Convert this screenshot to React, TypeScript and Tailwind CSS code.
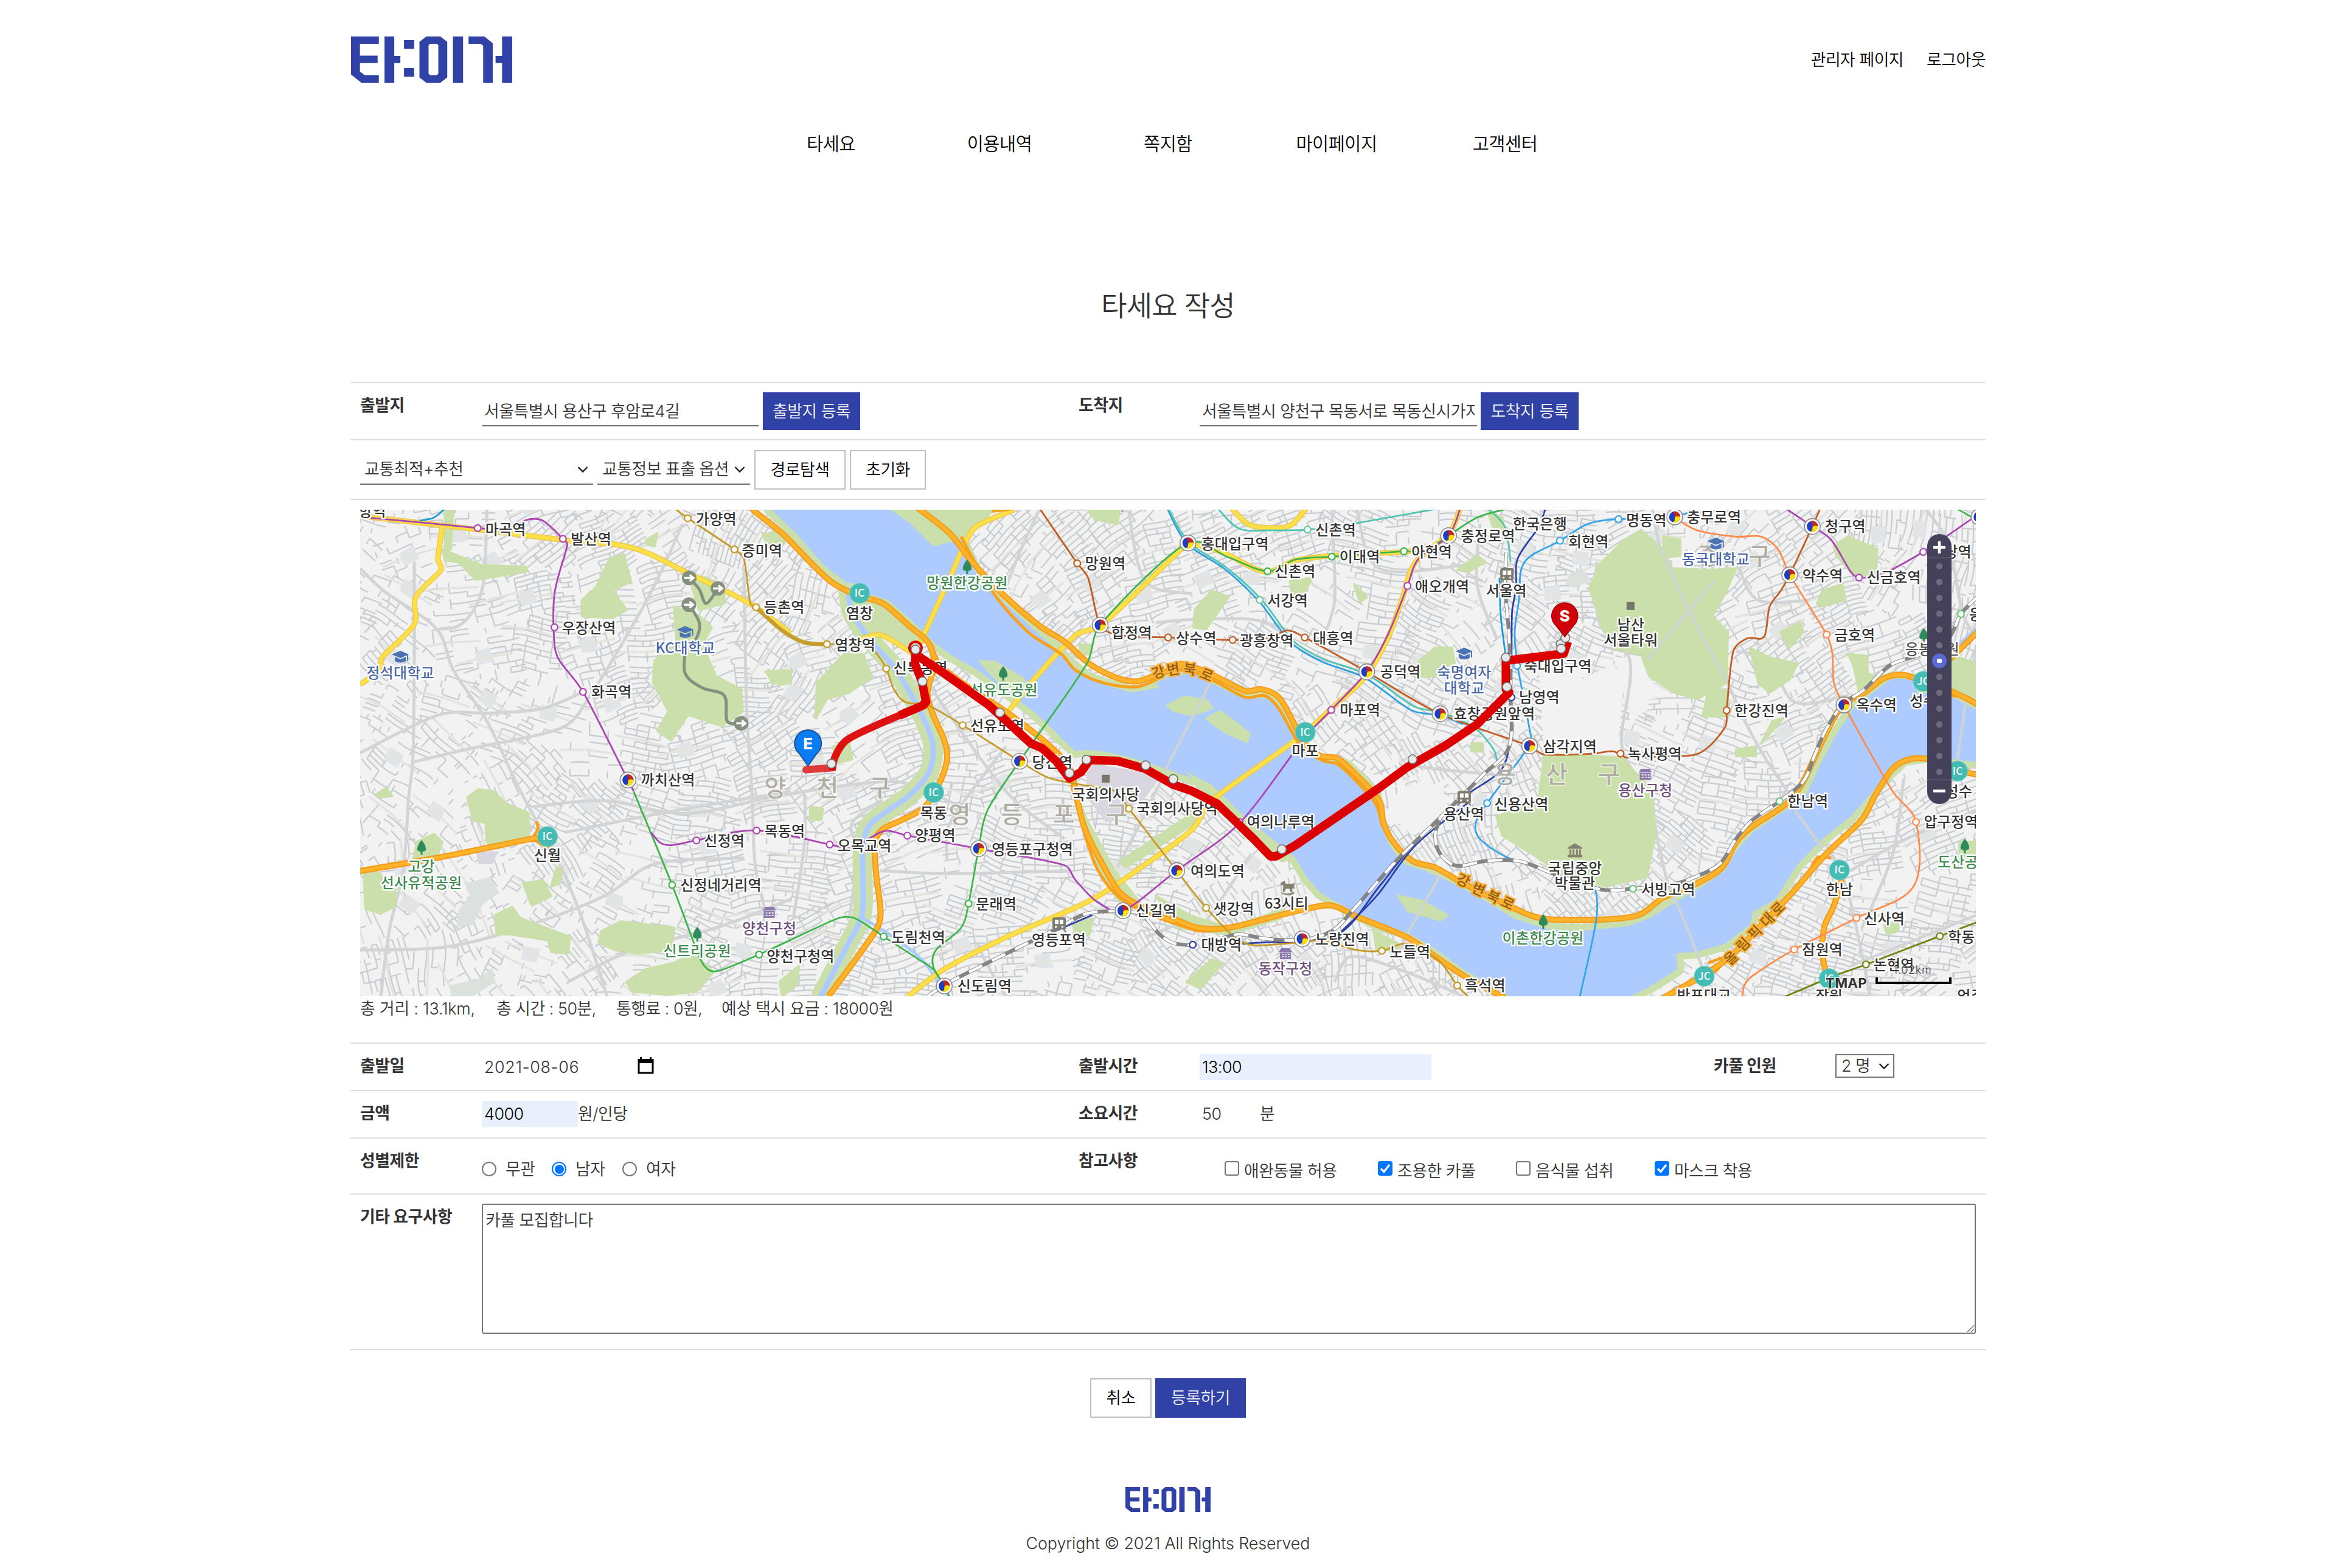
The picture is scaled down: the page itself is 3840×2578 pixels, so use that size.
import React from "react";

/* ---------- map geometry ----------
   The map is surveyed in four sheets (A–D), left to right. A point list is a
   string such as "A 26,40 B 10,20"; a letter switches to that sheet. */

const SHEETS: Record<string, number> = { A: 580, B: 1240, C: 1900, D: 2560 };
type Pt = [number, number];

function pts(src: string): Pt[] {
  let origin = SHEETS.A;
  const out: Pt[] = [];
  for (const token of src.trim().split(/\s+/)) {
    if (token in SHEETS) {
      origin = SHEETS[token];
      continue;
    }
    const [x, y] = token.split(",").map(Number);
    out.push([origin + x / 2.1778, 830 + y / 1.9122]);
  }
  return out;
}

const f = (n: number) => n.toFixed(1);

function line(src: string, close = false): string {
  const p = pts(src);
  return "M" + p.map(([x, y]) => `${f(x)} ${f(y)}`).join("L") + (close ? "Z" : "");
}

function curve(src: string): string {
  const p = pts(src);
  let d = `M${f(p[0][0])} ${f(p[0][1])}`;
  for (let i = 0; i < p.length - 1; i++) {
    const a = p[Math.max(0, i - 1)];
    const b = p[i];
    const c = p[i + 1];
    const e = p[Math.min(p.length - 1, i + 2)];
    const len = Math.hypot(c[0] - b[0], c[1] - b[1]);
    const t1 = Math.min(1 / 6, (len * 0.35) / (Math.hypot(c[0] - a[0], c[1] - a[1]) || 1));
    const t2 = Math.min(1 / 6, (len * 0.35) / (Math.hypot(e[0] - b[0], e[1] - b[1]) || 1));
    d += `C${f(b[0] + (c[0] - a[0]) * t1)} ${f(b[1] + (c[1] - a[1]) * t1)} ${f(c[0] - (e[0] - b[0]) * t2)} ${f(
      c[1] - (e[1] - b[1]) * t2
    )} ${f(c[0])} ${f(c[1])}`;
  }
  return d;
}

function random(seed: number) {
  let s = seed;
  return () => {
    s = (s + 0x6d2b79f5) | 0;
    let t = Math.imul(s ^ (s >>> 15), 1 | s);
    t = (t + Math.imul(t ^ (t >>> 7), 61 | t)) ^ t;
    return ((t ^ (t >>> 14)) >>> 0) / 4294967296;
  };
}

/* Side streets: the city is split into neighbourhoods around jittered centres,
   each filled with its own rotated lattice of blocks. */
function streets() {
  const r = random(7);
  const size = 84;
  const cols = 34;
  const rows = 12;
  const seeds: { x: number; y: number; ang: number; a: number; b: number; keep: number; amp: number }[] = [];
  for (let j = 0; j < rows; j++) {
    for (let i = 0; i < cols; i++) {
      const x = 560 + i * size + (r() - 0.5) * 60;
      const y = 810 + j * size + (r() - 0.5) * 60;
      const rural = x < 850 || (x < 1130 && y > 1400);
      seeds.push({
        x,
        y,
        ang: Math.sin(x / 300) * 0.7 + Math.cos(y / 240) * 0.6 + (r() - 0.5) * 0.9,
        a: 18 + r() * 14,
        b: 7.5 + r() * 4,
        keep: rural ? 0.25 + r() * 0.35 : r() < 0.12 ? 0.35 : 0.82,
        amp: 1 + r() * 3,
      });
    }
  }
  let fine = "";
  let wide = "";
  let lots = "";
  seeds.forEach((s, k) => {
    const i = k % cols;
    const j = Math.floor(k / cols);
    const near = seeds.filter((_, n) => Math.abs((n % cols) - i) <= 2 && Math.abs(Math.floor(n / cols) - j) <= 2 && n !== k);
    const co = Math.cos(s.ang);
    const si = Math.sin(s.ang);
    const inside = (x: number, y: number) => {
      const d = (x - s.x) ** 2 + (y - s.y) ** 2;
      return near.every((n) => (x - n.x) ** 2 + (y - n.y) ** 2 > d);
    };
    const place = (u: number, v: number): Pt => {
      const w = v + Math.sin(u / 17 + k) * s.amp;
      return [s.x + u * co - w * si, s.y + u * si + w * co];
    };
    for (let u = -90; u < 90; u += s.a) {
      for (let v = -90; v < 90; v += s.b) {
        const p = place(u, v);
        if (!inside(p[0], p[1])) continue;
        const q = place(u + s.a, v);
        const m = place(u + s.a / 2, v);
        const t = place(u + (r() < 0.75 ? 0 : r() * s.a), v);
        const t2 = place(u, v + s.b);
        if (r() < s.keep) fine += `M${f(p[0])} ${f(p[1])}L${f(m[0])} ${f(m[1])}L${f(q[0])} ${f(q[1])}`;
        if (r() < s.keep) fine += `M${f(t[0])} ${f(t[1])}l${f(t2[0] - p[0])} ${f(t2[1] - p[1])}`;
      }
    }
    const e = place(-46, 0);
    const g = place(46, 4);
    wide += `M${f(e[0])} ${f(e[1])}L${f(s.x)} ${f(s.y)}L${f(g[0])} ${f(g[1])}`;
    if (r() < 0.3) {
      const c = [place(-14, -10), place(12, -13), place(15, 11), place(-12, 12)];
      lots += "M" + c.map((n) => `${f(n[0])} ${f(n[1])}`).join("L") + "Z";
    }
  });
  return { fine, wide, lots };
}
const STREETS = streets();

const RIVER =
  "B 60,15 150,90 250,190 330,245 380,250 410,280 480,300 560,360 640,430 700,470 800,520 1000,650 1080,715 1100,735 1150,775 1180,770 1250,775 1350,795 1460,825 1568,860 C 100,835 200,880 330,990 430,1060 500,1110 540,1170 590,1220 650,1250 720,1285 800,1320 900,1345 1000,1395 1100,1460 1200,1510 1290,1560 D 230,1560 340,1510 430,1460 425,1410 500,1405 600,1380 690,1320 700,1280 780,1240 860,1130 950,1050 1050,980 1100,930 1180,850 1240,800 1320,790 1510,810 1510,650 1450,620 1400,600 1290,590 1270,550 1200,545 1130,590 1060,640 1000,720 940,820 880,930 800,970 700,1030 640,1090 600,1150 520,1200 420,1250 330,1300 250,1325 140,1335 C 1520,1340 1400,1335 1280,1300 1150,1230 1040,1180 960,1150 890,1130 850,1090 820,1040 795,980 785,920 740,870 680,820 610,810 560,790 500,740 470,690 440,640 400,610 340,605 290,600 200,560 140,530 60,535 0,560 B 1450,575 1350,590 1270,570 1190,545 1130,500 1060,440 960,360 860,280 790,210 740,110 640,130 560,60 480,10";

const PARKS = [
  "A 920,170 970,155 995,240 930,270 980,330 930,355 820,350 820,300 870,260",
  "A 1150,320 1240,350 1285,385 1250,440 1300,540 1390,580 1395,650 1320,695 1200,660 1140,740 1090,710 1130,650 1075,560 1080,490 1160,440",
  "A 1200,220 1270,230 1330,260 1330,310 1240,330",
  "A 410,920 450,895 500,900 550,940 630,970 630,1040 520,1080 480,1060 475,1000 430,990",
  "A 230,1060 290,1035 320,1060 300,1110 215,1120",
  "A 40,1160 90,1155 150,1210 155,1260 100,1285 45,1270",
  "A 890,1340 960,1310 1150,1330 1140,1400 1020,1410 940,1400 880,1375",
  "A 980,1500 1050,1460 1150,1440 1220,1410 1290,1470 1230,1530 1130,1540 1000,1530",
  "A 510,1290 570,1265 600,1300 690,1330 780,1360 770,1380 640,1360 560,1350 515,1350",
  "A 320,140 460,190 620,195 620,210 440,235 380,180 330,175",
  "A 330,10 360,10 350,140 330,150",
  "A 610,1190 680,1180 710,1230 640,1260",
  "A 1485,530 1568,520 1568,560 1500,560",
  "A 85,910 120,890 140,915 100,920",
  "A 1050,110 1090,90 1080,130 1055,125",
  "A 730,1140 750,1150 740,1190 710,1200",
  "A 700,1370 775,1380 770,1410 710,1405",
  "B 225,560 320,470 390,470 420,540 340,590 260,610 220,670",
  "B 40,525 120,520 130,560 90,565",
  "B 30,95 90,80 120,110 60,140",
  "B 480,10 860,10 800,70 700,130 560,60",
  "B 280,760 340,750 350,800 300,810",
  "B 200,950 245,955 240,990 200,990",
  "B 340,240 480,310 620,430 540,440 420,400",
  "B 1165,440 1210,440 1200,470 1165,465",
  "B 1180,5 1310,5 1300,60 1220,45",
  "B 1310,1120 1568,970 C 140,1000 B 1330,1140",
  "B 1140,880 1190,990 1290,1150 1380,1250 1300,1240 1200,1080",
  "B 1140,1320 1210,1300 1200,1350 1150,1350",
  "B 90,1500 160,1450 150,1510 100,1545",
  "B 1160,760 1260,770 1460,825 1568,870 C 200,930 330,1050 450,1120 500,1110 430,1050 200,860 0,800 B 1400,790 1200,745",
  "C 0,1230 120,1290 260,1330 460,1270 450,1300 260,1350 80,1330",
  "C 930,540 945,490 1000,450 1060,450 1070,500 1020,510 1000,540",
  "C 140,330 200,270 260,290 180,390 135,385",
  "C 480,240 560,230 530,280 490,290",
  "C 710,250 755,290 730,305",
  "C 1080,205 1150,160 1180,180 1120,210",
  "C 1190,20 1240,40 1250,100 1210,80",
  "C 1130,750 1170,750 1170,775 1130,775",
  "C 110,1500 200,1430 240,1440 160,1520",
  "C 780,1340 870,1380 870,1400 790,1400",
  "C 1390,790 1568,790 D 230,795 340,900 350,1040 320,1170 170,1200 C 1430,1150 1370,1110 1240,1040 1220,980 1370,930",
  "D 240,110 300,80 380,140 410,200 550,205 640,200 600,280 555,350 610,400 605,560 500,610 420,590 330,540 300,470 200,450 160,380 115,260 150,190",
  "D 380,100 440,110 440,160 380,165",
  "D 540,590 610,580 610,665 520,665",
  "D 690,450 760,480 860,500 830,550 760,590 720,560",
  "D 800,400 870,370 880,400 830,450",
  "D 930,310 950,270 1020,250 1030,300 940,320",
  "D 1040,470 1110,475 1110,530 1140,540 1080,590 1060,500",
  "D 990,130 1040,100 1145,140 1140,220 1060,220 1000,160",
  "D 640,770 710,760 710,790 640,790",
  "D 730,750 770,680 810,670 760,720",
  "D 1410,470 1500,500 1500,640 1420,600",
  "D 1440,1060 1500,1060 1500,1110 1440,1110",
  "D 1170,1320 1220,1310 1220,1340 1180,1350",
];

const ISLANDS = [
  "B 800,488 860,490 960,540 1010,590 930,600 850,540",
  "C 35,630 100,600 180,610 210,640 130,665 60,650",
  "C 175,670 230,645 300,690 340,720 330,750 250,720 200,690",
  "C 860,1225 950,1240 1050,1290 1020,1310 900,1280",
];

const CLEARINGS = [
  "C 1370,500 1568,520 D 60,560 200,500 240,560 220,720 230,790 C 1390,790",
  "C 870,890 960,870 1010,900 1060,920 1000,1000 920,1040 870,1000 850,940",
  "D 250,560 320,600 330,640 260,680",
  "D 200,480 300,480 340,560 420,600 260,620",
];

const CIVIC = ["B 1190,810 1460,850 1400,920 1260,1000 1190,920", "A 440,1090 520,1090 500,1130 450,1130"];

const GREY_ROADS = [
  "A 26,780 310,660 500,655 680,640 820,590",
  "A 26,200 110,270 300,390 360,520 480,680 600,900 740,1130 820,1300 910,1545",
  "A 480,15 470,230 440,320 380,380 310,390",
  "A 220,180 220,500 215,800 200,920 180,1150 130,1340 100,1545",
  "A 210,810 400,770 750,700 850,600 1040,320 1120,180 1180,60",
  "A 26,1400 330,1390 600,1330 900,1230 1080,1130 1400,1110",
  "A 770,1500 1000,1400 1300,1330 1568,1240",
  "A 640,950 900,930 1200,970 1568,900",
  "A 760,1030 1100,970 1430,920 1568,905",
  "A 1400,200 1410,640 1430,920 1440,1130 1480,1290",
  "B 0,930 260,890 500,870 620,900 760,960",
  "B 620,560 900,900 1110,1050",
  "B 180,910 180,1060 140,1300",
  "B 340,1300 370,1090 350,1000 460,930",
  "B 690,1120 700,1000 900,760",
  "B 450,1150 700,1160 1130,1150",
  "B 1568,640 1460,860 1300,1140",
  "B 900,1545 830,1440 800,1380",
  "B 1020,15 950,150 900,260",
  "B 1340,20 1400,240 1568,280",
  "B 1400,1360 1568,1300",
  "C 200,550 30,840 0,860",
  "C 0,370 140,360 340,360 460,390",
  "C 630,15 640,300 600,420",
  "C 720,15 800,200 1100,190",
  "C 920,820 1000,830 1230,850",
  "C 1020,1160 900,1350 860,1420",
  "C 180,1310 280,1180 340,1100",
  "C 640,1500 700,1420 900,1470 1100,1545",
  "C 1160,60 1150,250 1220,420",
  "D 340,15 370,140 430,270 520,400 610,560 660,660 740,790 870,960 990,1110 1050,1250 1120,1545",
  "D 140,180 150,370 260,490 230,720 240,790 330,930 360,1060 400,1200 460,1320 530,1480",
  "D 650,200 720,300 900,300",
  "D 1320,15 1400,120 1450,340 1500,420",
  "D 640,460 760,490 850,620 1040,600",
  "D 1500,440 1460,650 1430,820",
  "D 850,960 950,1080",
  "D 1050,1150 1250,1050 1500,960",
  "D 1090,1330 1200,1100 1240,860",
  "D 1050,1450 1500,1290",
];

const STREAM =
  "B 335,260 350,340 420,430 500,510 550,580 610,680 640,760 625,840 560,910 480,960 410,1010 388,1080 388,1180 385,1290 330,1390 235,1550";

const YELLOW_ROADS = [
  "A 26,35 450,78 750,110 1000,135 1200,215 1420,310 1568,405",
  "A 320,70 305,170 315,205 225,290 220,375 105,480 95,520 26,565",
  "B 360,430 440,408 500,430 570,470",
  "B 590,440 700,230 760,110 800,65 930,15",
  "B 900,660 1000,550 1150,410 1240,380 1550,120",
  "B 550,1545 680,1460 900,1360 1200,1245 1400,1130 1568,1020 C 200,930 500,740 630,640 750,540 830,420 880,300 930,180 1050,90 1090,10",
  "C 270,10 330,60 400,72 480,65 540,10",
  "C 120,120 240,150 390,210 500,175 630,160 890,148 940,140",
];

const HIGHWAYS = [
  "A 1430,10 B 0,20 100,90 200,180 280,245 370,285 460,310 560,385 620,430 660,500 760,570 900,650 1060,760 1130,830 1150,900 1180,1010 1240,1120 1310,1220 1400,1270 1500,1310 C 60,1300 150,1330 260,1330 400,1300 540,1270 630,1260 720,1295 900,1360 1000,1420 1120,1490 1250,1550",
  "B 630,440 645,500 620,590 640,660 680,740 690,800 660,880 610,950 530,990 460,1020 432,1060 435,1150 452,1280 440,1330 370,1420 265,1545",
  "B 585,10 700,90 780,180 900,290 1020,380 1110,430 1200,500 1300,545 1370,555 1440,535 1520,510 C 90,500 180,525 320,585 380,580 440,605 490,680 530,750 590,790 650,797 730,860 800,930 815,1000 850,1060 920,1120 1000,1140 1100,1190 1240,1250 1380,1300 1568,1305 D 150,1305 290,1290 380,1235 500,1190 590,1140 640,1060 700,1010 820,940 880,870 950,740 1020,630 1100,590 1170,545 1240,535 1320,560 1420,590 1510,630",
  "D 380,1550 520,1480 620,1420 720,1330 830,1230 960,1100 1090,990 1140,910 1200,830 1260,800 1330,800 1440,835 1510,850",
  "D 1020,1170 990,1260 955,1330 950,1420 985,1550",
  "D 1405,485 1510,395",
  "A 20,1152 300,1110 500,1075 640,1050 700,1045",
];

const RAMPS = [
  "B 740,100 850,270 980,400 1100,470 1150,520 1250,560 1370,572 1450,545",
  "C 0,530 100,520 200,550 320,605 390,600 440,640 520,760 600,805 650,815 730,880 790,945 810,1010",
  "A 640,1050 662,1020 658,995",
  "A 640,1050 705,1080",
  "B 1135,880 1220,1130 1330,1250 1568,1335 C 180,1340 290,1330",
  "B 850,20 930,12",
  "D 900,1160 930,1110 980,1110",
  "D 540,1440 600,1425 560,1470 420,1530",
  "D 1400,600 1470,605 1510,630",
];

const RAILS = [
  "C 1255,150 1250,250 1265,420 1270,600 1265,760 1170,850 1010,990 860,1120 700,1280 630,1340 524,1368 400,1365 300,1350 240,1362",
  "B 1320,1276 1190,1285 1090,1330 950,1390 700,1500 620,1545",
  "B 1320,1276 1390,1290 1450,1350 1500,1378 1568,1385",
  "D 1510,285 1445,343 1400,420 1300,470 1190,505 1100,580 1020,630 960,710 920,790 880,870 796,932 700,990 640,1050 580,1130 480,1175 400,1195 271,1207 160,1210 C 1430,1162 1300,1120 1180,1120 1080,1135 1020,1100 1000,1040 1020,980",
];

const SUBWAYS: { color: string; d: string }[] = [
  { color: "#1b9ad8", d: "A 240,50 290,40 330,12" },
  { color: "#2f9fe0", d: "C 40,10 112,122 247,202 367,301 445,392 496,443 596,494 750,545 915,646 1018,662 1100,690" },
  { color: "#4fc6b4", d: "C 44,10 119,118 254,198 377,297 455,388 504,437 604,486 759,535 924,634 1018,652 1140,700 1210,770 1222,810" },
  { color: "#4fc6b4", d: "C 220,10 300,75 420,80 543,78 700,60 1010,12" },
  { color: "#4fc6b4", d: "C 1190,12 1250,70 1270,180" },
  { color: "#1b9ad8", d: "C 1230,230 1235,350 1253,480" },
  { color: "#2b3fa6", d: "C 1395,12 1370,70 1295,170 1290,260 1275,340 1273,605 1265,760 1230,840 1100,920 930,1060 800,1200 670,1340 524,1372 400,1375 310,1380" },
  { color: "#2b3fa6", d: "C 1120,935 930,1070 790,1230 660,1345" },
  { color: "#2b3fa6", d: "B 1210,1290 1090,1335 1000,1370" },
  { color: "#c59a26", d: "A 1150,10 1199,42 1366,140 1400,170 1423,310 1443,322 B 100,395 180,433 260,438 400,440 440,470 472,515 500,580 540,620 620,630 746,693 950,806 1060,860 1240,890 1290,900 1341,955 1512,1150 C 180,1267 290,1365 360,1385 524,1375 600,1370 720,1400 809,1402 900,1380 1010,1430 1079,1511 1120,1548" },
  { color: "#c25c20", d: "B 1020,10 1156,184 1195,230 1238,378 1310,410 1482,417 C 275,425 400,420 470,395 533,417 755,525 1018,657 1338,758 1390,785 1568,782 D 200,775 250,795 380,790 510,780 600,700 606,646 630,460 680,420 740,415 760,320 800,270 832,220 913,68 942,10" },
  { color: "#3db54b", d: "A 1005,900 1143,1195 1240,1420 1270,1460 1310,1465 1454,1414 B 300,1300 360,1300 463,1357 590,1430 640,1460 680,1513 700,1550" },
  { color: "#3db54b", d: "B 680,1513 640,1450 650,1400 740,1330 767,1254 803,1081 835,960 950,806 1190,500 1238,378 1550,120 C 260,165 400,209 500,172 630,163 888,146 960,146 1048,97 1150,40 1260,12" },
  { color: "#ab45b3", d: "A 26,38 240,55 447,73 560,80 620,48 680,50 752,107 768,125 722,280 722,440 740,490 824,588 985,865 1005,900" },
  { color: "#ab45b3", d: "A 1068,1030 1100,1062 1140,1070 1230,1055 1445,1024 B 270,1068 350,1080 400,1055 470,1025 548,1040 803,1081 1110,1133 1150,1180 1230,1250 1320,1276 1512,1150 C 300,1000 535,730 628,645 755,525 830,410 901,255 940,170 1048,97 1090,10" },
  { color: "#35a4e8", d: "D 520,10 400,40 219,45 110,60 10,113 C 1320,180 1300,300 1285,400 1295,505 1345,740 1338,758 1186,938 1145,1000 1160,1050 1250,1105 1340,1130 1490,1180 D 130,1200 140,1300 80,1548" },
  { color: "#ff8b4b", d: "D 420,40 500,80 640,100 730,100 790,140 832,220 964,408 985,470 990,560 1026,630 1200,900 1284,997 1275,1200 1071,1299 848,1398 700,1480 670,1510 662,1548" },
  { color: "#ab45b3", d: "D 815,10 913,68 980,110 1050,210 1080,229 1170,215 1310,148 1400,95 1490,40" },
  { color: "#3db54b", d: "D 1430,12 1490,42" },
  { color: "#75830b", d: "D 810,1548 980,1485 1105,1445 1369,1356 1510,1310" },
];

/* [sheet, markerX, markerY, line colour, labelX, labelY, name] */
const STATIONS: [string, number, number, string, number, number, string][] = [
  ["A", 447, 73, "#ab45b3", 474, 76, "마곡역"],
  ["A", 752, 107, "#ab45b3", 780, 108, "발산역"],
  ["A", 1199, 42, "#c59a26", 1228, 44, "가양역"],
  ["A", 1366, 140, "#c59a26", 1392, 143, "증미역"],
  ["A", 722, 385, "#ab45b3", 748, 386, "우장산역"],
  ["A", 824, 588, "#ab45b3", 853, 588, "화곡역"],
  ["A", 1230, 1055, "#ab45b3", 1257, 1056, "신정역"],
  ["A", 1143, 1195, "#3db54b", 1172, 1195, "신정네거리역"],
  ["B", 6, 322, "#c59a26", 34, 322, "등촌역"],
  ["B", 260, 438, "#c59a26", 288, 440, "염창역"],
  ["B", 472, 515, "#c59a26", 498, 513, "신목동역"],
  ["B", 746, 693, "#c59a26", 773, 695, "선유도역"],
  ["B", 8, 1024, "#ab45b3", 36, 1025, "목동역"],
  ["B", 270, 1068, "#ab45b3", 297, 1070, "오목교역"],
  ["B", 548, 1040, "#ab45b3", 575, 1039, "양평역"],
  ["B", 767, 1254, "#3db54b", 793, 1254, "문래역"],
  ["B", 463, 1357, "#3db54b", 490, 1360, "도림천역"],
  ["B", 17, 1414, "#3db54b", 44, 1418, "양천구청역"],
  ["B", 1156, 184, "#c25c20", 1184, 184, "망원역"],
  ["B", 1341, 955, "#c59a26", 1368, 955, "국회의사당역"],
  ["C", 44, 417, "#c25c20", 72, 418, "상수역"],
  ["C", 275, 425, "#c25c20", 300, 426, "광흥창역"],
  ["C", 533, 417, "#c25c20", 562, 418, "대흥역"],
  ["C", 543, 78, "#6cc79a", 571, 78, "신촌역"],
  ["C", 630, 163, "#3db54b", 657, 163, "이대역"],
  ["C", 400, 209, "#3db54b", 426, 209, "신촌역"],
  ["C", 372, 299, "#6cc79a", 399, 300, "서강역"],
  ["C", 888, 146, "#3db54b", 915, 147, "아현역"],
  ["C", 901, 255, "#ab45b3", 928, 257, "애오개역"],
  ["C", 628, 645, "#ab45b3", 658, 645, "마포역"],
  ["C", 300, 997, "#ab45b3", 326, 997, "여의나루역"],
  ["C", 180, 1267, "#c59a26", 206, 1270, "샛강역"],
  ["C", 132, 1383, "#2b3fa6", 162, 1383, "대방역"],
  ["C", 809, 1402, "#c59a26", 837, 1405, "노들역"],
  ["C", 1079, 1511, "#c59a26", 1106, 1511, "흑석역"],
  ["C", 1447, 113, "#35a4e8", 1476, 115, "회현역"],
  ["C", 1293, 506, "#35a4e8", 1318, 507, "숙대입구역"],
  ["C", 1273, 605, "#2b3fa6", 1300, 605, "남영역"],
  ["C", 1186, 938, "#35a4e8", 1212, 940, "신용산역"],
  ["D", 219, 45, "#35a4e8", 246, 47, "명동역"],
  ["D", 964, 408, "#ff8b4b", 992, 409, "금호역"],
  ["D", 606, 646, "#c25c20", 634, 647, "한강진역"],
  ["D", 226, 782, "#c25c20", 252, 783, "녹사평역"],
  ["D", 796, 932, "#6cc77a", 824, 932, "한남역"],
  ["D", 271, 1207, "#6cc77a", 300, 1208, "서빙고역"],
  ["D", 1080, 229, "#ab45b3", 1108, 227, "신금호역"],
  ["D", 1310, 148, "#ab45b3", 1337, 148, "행당역"],
  ["D", 1445, 343, "#6cc77a", 1474, 345, "응봉역"],
  ["D", 1284, 997, "#ff8b4b", 1312, 997, "압구정역"],
  ["D", 1071, 1299, "#ff8b4b", 1098, 1300, "신사역"],
  ["D", 848, 1398, "#ff8b4b", 876, 1398, "잠원역"],
  ["D", 1369, 1356, "#75830b", 1398, 1357, "학동역"],
  ["D", 1105, 1445, "#75830b", 1132, 1445, "논현역"],
];

const TRANSFERS: [string, number, number, number, number, string][] = [
  ["A", 985, 865, 1031, 865, "까치산역"],
  ["B", 950, 806, 994, 808, "당산역"],
  ["B", 803, 1081, 850, 1083, "영등포구청역"],
  ["B", 1238, 378, 1278, 402, "합정역"],
  ["B", 1320, 1276, 1366, 1275, "신길역"],
  ["B", 680, 1513, 727, 1513, "신도림역"],
  ["C", 115, 120, 162, 122, "홍대입구역"],
  ["C", 75, 1150, 124, 1152, "여의도역"],
  ["C", 1048, 97, 1092, 97, "충정로역"],
  ["C", 755, 525, 803, 524, "공덕역"],
  ["C", 1018, 657, 1066, 656, "효창공원앞역"],
  ["C", 1338, 758, 1385, 760, "삼각지역"],
  ["C", 524, 1365, 570, 1365, "노량진역"],
  ["D", 420, 38, 464, 38, "충무로역"],
  ["D", 913, 68, 958, 66, "청구역"],
  ["D", 832, 220, 877, 221, "약수역"],
  ["D", 1026, 629, 1070, 630, "옥수역"],
  ["D", 1510, 38, 1560, 38, ""],
];

/* Centred labels: [sheet, x, y, text, colour] */
const LABELS: [string, number, number, string, string][] = [
  ["A", 70, 20, "항역", "#333"],
  ["A", 170, 527, "정석대학교", "#4a68a8"],
  ["A", 1190, 450, "KC대학교", "#4a68a8"],
  ["A", 245, 1135, "고강", "#3f8a4f"],
  ["A", 245, 1187, "선사유적공원", "#3f8a4f"],
  ["A", 697, 1102, "신월", "#333"],
  ["A", 1233, 1402, "신트리공원", "#3f8a4f"],
  ["A", 1491, 1330, "양천구청", "#6d4f80"],
  ["B", 377, 340, "염창", "#333"],
  ["B", 762, 245, "망원한강공원", "#3f8a4f"],
  ["B", 893, 581, "선유도공원", "#3f8a4f"],
  ["B", 642, 968, "목동", "#333"],
  ["B", 1258, 911, "국회의사당", "#333"],
  ["B", 1090, 1367, "영등포역", "#333"],
  ["C", 535, 773, "마포", "#333"],
  ["C", 1104, 525, "숙명여자", "#4a68a8"],
  ["C", 1104, 575, "대학교", "#4a68a8"],
  ["C", 1255, 270, "서울역", "#333"],
  ["C", 1375, 60, "한국은행", "#333"],
  ["C", 1103, 972, "용산역", "#333"],
  ["C", 468, 1252, "63시티", "#333"],
  ["C", 464, 1458, "동작구청", "#6d4f80"],
  ["C", 1386, 1362, "이촌한강공원", "#3f8a4f"],
  ["D", 63, 1142, "국립중앙", "#333"],
  ["D", 63, 1190, "박물관", "#333"],
  ["D", 263, 376, "남산", "#333"],
  ["D", 263, 424, "서울타워", "#333"],
  ["D", 567, 171, "동국대학교", "#4a68a8"],
  ["D", 1342, 453, "응봉공원", "#555"],
  ["D", 315, 896, "용산구청", "#6d4f80"],
  ["D", 1310, 616, "성수", "#333"],
  ["D", 1437, 900, "성수", "#333"],
  ["D", 1010, 1209, "한남", "#333"],
  ["D", 1458, 1123, "도산공원", "#3f8a4f"],
  ["D", 525, 1541, "반포대교", "#333"],
  ["D", 973, 1543, "잠원", "#333"],
  ["D", 1480, 1543, "언주", "#333"],
];

const DISTRICTS: [string, number, number, string][] = [
  ["B", 75, 890, "양"],
  ["B", 262, 890, "천"],
  ["B", 450, 890, "구"],
  ["B", 735, 973, "영"],
  ["B", 922, 973, "등"],
  ["B", 1108, 973, "포"],
  ["B", 1297, 973, "구"],
  ["C", 1250, 848, "용"],
  ["C", 1435, 848, "산"],
  ["D", 185, 848, "구"],
  ["D", 540, 160, "중"],
  ["D", 725, 160, "구"],
  ["B", 1155, -8, "포"],
  ["B", 1318, -12, "구"],
];

const ROAD_NAMES: [string, number, number, number, string][] = [
  ["B", 1447, 527, -18, "강"],
  ["B", 1500, 518, -8, "변"],
  ["C", 122, 517, 6, "북"],
  ["C", 182, 535, 22, "로"],
  ["C", 1100, 1182, 25, "강"],
  ["C", 1155, 1210, 25, "변"],
  ["C", 1208, 1233, 25, "북"],
  ["C", 1260, 1253, 25, "로"],
  ["D", 622, 1425, -45, "올"],
  ["D", 665, 1382, -45, "림"],
  ["D", 708, 1345, -45, "픽"],
  ["D", 752, 1305, -45, "대"],
  ["D", 790, 1270, -45, "로"],
];

const JUNCTIONS: [string, number, number, string][] = [
  ["A", 697, 1043, "IC"],
  ["B", 377, 278, "IC"],
  ["B", 642, 904, "IC"],
  ["C", 535, 715, "IC"],
  ["D", 1010, 1148, "IC"],
  ["D", 1433, 837, "IC"],
  ["D", 973, 1490, "IC"],
  ["D", 1310, 555, "JC"],
  ["D", 526, 1482, "JC"],
];

const TREES: [string, number, number][] = [
  ["A", 246, 1077],
  ["A", 1233, 1350],
  ["B", 762, 195],
  ["B", 891, 530],
  ["C", 1387, 1310],
  ["D", 1312, 410],
  ["D", 1459, 1073],
];
const CAPS: [string, number, number][] = [
  ["A", 170, 478],
  ["A", 1190, 400],
  ["C", 1104, 468],
  ["D", 568, 122],
];
const HALLS: [string, number, number][] = [
  ["A", 1491, 1281],
  ["C", 464, 1411],
  ["D", 315, 847],
];
const TRAINS: [string, number, number][] = [
  ["B", 1091, 1318],
  ["C", 1257, 220],
  ["C", 1104, 921],
];
const TUNNELS: [string, number, number][] = [
  ["A", 1204, 230],
  ["A", 1307, 263],
  ["A", 1203, 314],
  ["A", 1390, 687],
];
const TURNS: [string, number, number][] = [
  ["B", 276, 814],
  ["B", 602, 555],
  ["B", 577, 455],
  ["B", 879, 653],
  ["B", 1128, 843],
  ["B", 1189, 801],
  ["B", 1401, 819],
  ["B", 1500, 862],
  ["C", 451, 1083],
  ["C", 919, 800],
  ["C", 1257, 572],
  ["C", 1253, 480],
  ["C", 1449, 438],
  ["C", 1466, 418],
  ["C", 1451, 452],
];

const at = (sheet: string, x: number, y: number): Pt => pts(`${sheet} ${x},${y}`)[0];
const move = (sheet: string, x: number, y: number) => {
  const [a, b] = at(sheet, x, y);
  return `translate(${f(a)} ${f(b)})`;
};

function Stroke({ list, width, color, dash }: { list: string[]; width: number; color: string; dash?: string }) {
  return (
    <g fill="none" stroke={color} strokeWidth={width} strokeLinejoin="round" strokeDasharray={dash}>
      {list.map((s) => (
        <path key={s} d={curve(s)} />
      ))}
    </g>
  );
}

function RouteMap() {
  const halo = {
    stroke: "#ffffff",
    strokeWidth: 5,
    strokeLinejoin: "round" as const,
    paintOrder: "stroke" as const,
  };
  return (
    <svg
      viewBox="592 838 2656 800"
      className="block h-[800px] w-[2656px] font-['Noto_Sans_CJK_KR',sans-serif] tracking-[0.2px]"
    >
      <rect x="592" y="838" width="2656" height="800" fill="#f2f2f2" />
      <path d={STREETS.fine} fill="none" stroke="#c9cdd0" strokeWidth="2.3" />
      <path d={STREETS.lots} fill="#e1e5e7" />
      <path d={STREETS.wide} fill="none" stroke="#e4e3dd" strokeWidth="3.5" />
      {CLEARINGS.map((s) => (
        <path key={s} d={line(s, true)} fill="#f2f2f2" />
      ))}
      <g fill="#dbe1dc">
        <path d={line("A 400,1190 490,1170 525,1220 470,1250 430,1320 370,1330 380,1270 420,1230", true)} />
        <path d={line("A 350,1510 450,1490 500,1455 510,1500 420,1550 350,1550", true)} />
        <path d={line("D 40,220 90,200 120,240 60,260 30,250", true)} />
      </g>
      {CIVIC.map((s) => (
        <path key={s} d={line(s, true)} fill="#d9d6e0" />
      ))}
      <Stroke list={GREY_ROADS} width={5} color="#d2d4d5" />
      <g fill="#cbdfaa" stroke="#cbdfaa" strokeWidth="4" strokeLinejoin="round">
        {PARKS.map((s) => (
          <path key={s} d={line(s, true)} />
        ))}
      </g>
      <Stroke list={[STREAM]} width={32} color="#cbdfaa" />
      <path d={line(RIVER, true)} fill="#adcbff" stroke="#cbdfaa" strokeWidth="22" strokeLinejoin="round" />
      <path d={line(RIVER, true)} fill="#adcbff" />
      <path d={line("D 1400,480 1440,430 1510,375 1510,410 1430,470", true)} fill="#adcbff" />
      <Stroke list={[STREAM]} width={9} color="#adcbff" />
      <Stroke list={["B 390,1300 500,1360 600,1430 650,1490 700,1550"]} width={5} color="#adcbff" />
      <g fill="#cbdfaa">
        {ISLANDS.map((s) => (
          <path key={s} d={line(s, true)} />
        ))}
      </g>
      <Stroke
        list={[
          "C 200,550 30,840",
          "C 1020,1160 900,1350",
          "D 400,1200 460,1320 530,1480",
          "D 850,960 950,1080",
          "D 1465,600 1430,820",
          "D 610,560 470,330 360,120",
          "D 320,490 560,240",
        ]}
        width={4.5}
        color="#cfd3d4"
      />

      <Stroke list={YELLOW_ROADS} width={9} color="#edc84f" />
      <Stroke list={YELLOW_ROADS} width={6} color="#fde046" />
      <Stroke list={["B 6,322 100,395 180,433 260,438"]} width={7} color="#c9a53a" />
      <Stroke list={RAMPS} width={5} color="#f7a11f" />
      <Stroke list={HIGHWAYS} width={10} color="#f39a17" />
      <Stroke list={HIGHWAYS} width={6} color="#ffb32b" />

      {SUBWAYS.map(({ color, d }) => (
        <path key={d} d={curve(d)} fill="none" stroke={color} strokeWidth="2.8" />
      ))}
      <Stroke list={RAILS} width={6.2} color="#858585" />
      <Stroke list={RAILS} width={4.4} color="#ffffff" dash="24 18" />

      <Stroke
        list={["A 1204,230 1240,265 1265,310 1307,263", "A 1203,314 1240,370 1230,420 1195,450 1190,530 1250,575 1330,600 1340,680 1390,687"]}
        width={5}
        color="#85907f"
      />
      {TUNNELS.map(([s, x, y]) => (
        <g key={`${x}${y}`} transform={move(s, x, y)}>
          <circle r="12" fill="#85907f" />
          <path d="M-8 0H6M1 -5L7 0L1 5" fill="none" stroke="#fff" strokeWidth="3.4" />
        </g>
      ))}

      {DISTRICTS.map(([s, x, y, t]) => {
        const [a, b] = at(s, x, y);
        return (
          <text key={`${s}${x}`} x={a} y={b + 14} textAnchor="middle" fontSize="39" fontWeight="500" fill="#b0ada4" stroke="#ffffff" strokeOpacity="0.6" strokeWidth="3" paintOrder="stroke">
            {t}
          </text>
        );
      })}
      {ROAD_NAMES.map(([s, x, y, r, t]) => (
        <text key={`${s}${x}`} transform={`${move(s, x, y)} rotate(${r})`} y="8" textAnchor="middle" fontSize="23" fontWeight="500" fill="#8f5d0b" stroke="#fbb03a" strokeWidth="5" paintOrder="stroke">
          {t}
        </text>
      ))}

      {TREES.map(([s, x, y]) => (
        <g key={`${x}${y}`} transform={move(s, x, y)} fill="#2f8b5b">
          <path d="M0 -12C4 -8 8 0 7 4C6 8 -6 8 -7 4C-8 0 -4 -8 0 -12Z" />
          <rect x="-1.5" y="5" width="3" height="7" />
        </g>
      ))}
      {CAPS.map(([s, x, y]) => (
        <g key={`${x}${y}`} transform={move(s, x, y)} fill="#4a72b5">
          <path d="M0 -10L14 -4L0 2L-14 -4Z" />
          <path d="M-9 0L0 4L9 0V7Q0 12 -9 7ZM11 -4H13V6H11Z" />
        </g>
      ))}
      {HALLS.map(([s, x, y]) => (
        <g key={`${x}${y}`} transform={move(s, x, y)} fill="#8c78ae">
          <path d="M-11 -3L-7 -9H7L11 -3Z" />
          <path d="M-9 -2H9V9H-9ZM-6 0V2H-3V0ZM-1 0V2H2V0ZM4 0V2H7V0ZM-6 4V6H-3V4ZM-1 4V6H2V4ZM4 4V6H7V4Z" fillRule="evenodd" />
        </g>
      ))}
      {TRAINS.map(([s, x, y]) => (
        <g key={`${x}${y}`} transform={move(s, x, y)}>
          <path d="M-8 -11H8Q11 -11 11 -8V6Q11 9 8 9H-8Q-11 9 -11 6V-8Q-11 -11 -8 -11Z" fill="#7d7b70" />
          <path d="M-7 8L-11 13M7 8L11 13" fill="none" stroke="#7d7b70" strokeWidth="2.4" />
          <path d="M-7 -7H-1V0H-7ZM1 -7H7V0H1ZM-7 3H-4V6H-7ZM4 3H7V6H4Z" fill="#fff" />
        </g>
      ))}
      <g transform={move("D", 63, 1085)} fill="#84826f">
        <path d="M0 -11L12 -4V-2H-12V-4ZM-9 -1H-6V8H-9ZM-4 -1H-1V8H-4ZM2 -1H5V8H2ZM7 -1H10V8H7ZM-12 8H12V12H-12Z" />
      </g>
      <g transform={move("C", 472, 1203)} fill="#84826f">
        <path d="M-12 -7L-5 -11L-3 -6H8L11 -8V2H7L8 7H4L3 2H-3L-5 7H-8L-7 -3L-11 -4ZM-10 8Q0 13 11 7V10Q0 15 -10 10Z" />
      </g>
      <rect x={at("B", 1258, 861)[0] - 6.5} y={at("B", 1258, 861)[1] - 6.5} width="13" height="13" fill="#77766b" />
      <rect x={at("D", 262, 318)[0] - 6.5} y={at("D", 262, 318)[1] - 6.5} width="13" height="13" fill="#77766b" />

      {STATIONS.map(([s, x, y, c]) => {
        const [a, b] = at(s, x, y);
        return <circle key={`${s}${x}${y}`} cx={a} cy={b} r="5.4" fill="#fff" stroke={c} strokeWidth="2.2" />;
      })}
      {TRANSFERS.map(([s, x, y]) => (
        <g key={`${s}${x}${y}`} transform={move(s, x, y)}>
          <circle r="13" fill="#fff" stroke="#8d8d8d" strokeWidth="1.6" />
          <circle r="9.2" fill="#1f3fc0" />
          <path d="M-3 -8.700A9.2 9.2 0 0 1 9.2 0Q6 5 1 2Q-1 0 0 -3Q0 -6 -3 -8.700Z" fill="#c2261c" />
          <path d="M9.2 0A9.2 9.2 0 0 1 -4 8.300Q1 8 0 3Q1 -2 5 -1Q8 -1 9.2 0Z" fill="#ffdf00" />
        </g>
      ))}
      {JUNCTIONS.map(([s, x, y, t]) => (
        <g key={`${s}${x}`} transform={move(s, x, y)}>
          <circle r="16.5" fill="#45bcb3" stroke="#74cec7" strokeWidth="1" />
          <text y="6" textAnchor="middle" fontSize="17" fontWeight="500" fill="#fff">
            {t}
          </text>
        </g>
      ))}
      <g fontSize="24" fontWeight="500">
        {STATIONS.map(([s, x, y, , lx, ly, t]) => {
          const [a, b] = at(s, lx, ly);
          return (
            <text key={`${s}${x}${y}`} x={a} y={b + 9} fill="#333" {...halo}>
              {t}
            </text>
          );
        })}
        {TRANSFERS.map(([s, x, y, lx, ly, t]) => {
          const [a, b] = at(s, lx, ly);
          return (
            <text key={`${s}${x}${y}`} x={a} y={b + 9} fill="#333" {...halo}>
              {t}
            </text>
          );
        })}
        {LABELS.map(([s, x, y, t, c]) => {
          const [a, b] = at(s, x, y);
          return (
            <text key={`${s}${x}${y}`} x={a} y={b + 9} textAnchor="middle" fill={c} {...halo}>
              {t}
            </text>
          );
        })}
      </g>

      <g fill="none" stroke="#dd0000" strokeLinejoin="round">
        <path d={line("B 185,833 276,827")} strokeWidth="12" opacity="0.75" strokeLinecap="round" />
        <path d={curve("B 278,835 290,790 330,740 450,688 615,628")} strokeWidth="12" opacity="0.92" />
        <path
          d={line(
            "B 520,662 600,632 615,620 600,555 575,500 577,470 680,530 840,630 990,750 1030,765 1080,805 1128,860 1170,840 1200,802 1300,805 1400,830 1500,880 C 130,900 220,940 350,1050 410,1105 430,1105 500,1070 800,890 900,825 1040,755 1150,690 1265,590 1253,580 1253,490 1460,468 1475,430"
          )}
          strokeWidth="14"
        />
        <circle cx={at("B", 577, 450)[0]} cy={at("B", 577, 450)[1]} r="10" strokeWidth="4" />
      </g>
      {TURNS.map(([s, x, y]) => {
        const [a, b] = at(s, x, y);
        return <circle key={`${s}${x}${y}`} cx={a} cy={b} r="7.3" fill="#e9e9e9" stroke="#6f6f6f" strokeWidth="1.6" />;
      })}

      <g transform={move("B", 192, 752)}>
        <path d="M0 36L-14 16A22 22 0 1 1 14 16Z" fill="#0a7df5" stroke="#1d4f9c" strokeWidth="2" />
        <text y="9" textAnchor="middle" fontSize="26" fontWeight="800" fill="#fff" className="font-['Inter']">
          E
        </text>
      </g>
      <g transform={move("C", 1464, 350)}>
        <path d="M0 34L-15 15A21.5 21.5 0 1 1 15 15Z" fill="#d00008" stroke="#a00008" strokeWidth="1.5" />
        <text y="9" textAnchor="middle" fontSize="26" fontWeight="800" fill="#fff" className="font-['Inter']">
          S
        </text>
      </g>

      <rect x="3168" y="878" width="40" height="444" rx="20" fill="#46415a" />
      <path d="M3168 917H3208M3168 1282H3208" stroke="#5b5670" strokeWidth="1.5" />
      <path d="M3178 900H3198M3188 890V910M3178 1300.500H3198" stroke="#fff" strokeWidth="4.5" />
      {Array.from({ length: 14 }, (_, i) => (
        <circle key={i} cx="3188" cy={931 + i * 26} r="5.2" fill="#6d6b7d" />
      ))}
      <circle cx="3188" cy="1086.500" r="12" fill="#5b6bd6" />
      <rect x="3184" y="1083" width="8" height="7" rx="2" fill="#fff" />

      <text x="3112" y="1601" textLength="63" fontSize="18" fill="#444" className="font-['Inter']">
        1.02km
      </text>
      <text x="3001" y="1624" textLength="68" lengthAdjust="spacingAndGlyphs" fontSize="21" fontWeight="700" fill="#333" stroke="#fff" strokeWidth="1.5" paintOrder="stroke" className="font-['Inter']">
        TMAP
      </text>
      <path d="M3085 1607V1616H3206V1607" fill="none" stroke="#000" strokeWidth="4" />
    </svg>
  );
}

/* ---------- page pieces ---------- */

function Logo({ className }: { className: string }) {
  return (
    <svg viewBox="51 62 794 226" preserveAspectRatio="none" className={className} fill="#3142a6" role="img" aria-label="타:이거">
      <path d="M51 62H188V98H95V156H182V192H95V234L118 251H188V288H102L51 248Z" />
      <path d="M216 62H264V157H294V192H264V288H216Z" />
      <path d="M312 80H362V122H312ZM312 217H362V258H312Z" />
      <path
        fillRule="evenodd"
        d="M422 62H491L525 88V262L491 288H422L388 262V88ZM433 104V245L441 251H473L481 245V104L473 98H441Z"
      />
      <path d="M553 62H603V288H553Z" />
      <path d="M630 62H708L749 95V288H702V107L690 98H630Z" />
      <path d="M795 62H845V288H795V192H763V157H795Z" />
    </svg>
  );
}

function Chevron() {
  return (
    <svg viewBox="0 0 18 12" className="h-3 w-[18px] shrink-0" fill="none" stroke="#222" strokeWidth="2.400">
      <path d="M1.500 2L9 9.500L16.500 2" />
    </svg>
  );
}

function Radio({ label, checked, className = "" }: { label: string; checked?: boolean; className?: string }) {
  return (
    <label className={`flex items-center ${className}`}>
      <span
        className={`flex size-6 items-center justify-center rounded-full border-2 ${checked ? "border-[#0075ff]" : "border-[#767676]"}`}
      >
        {checked && <span className="size-[15px] rounded-full bg-[#0075ff]" />}
      </span>
      <span className="ml-[15px]">{label}</span>
    </label>
  );
}

function Check({ label, checked, className = "" }: { label: string; checked?: boolean; className?: string }) {
  return (
    <label className={`flex ${className}`}>
      {checked ? (
        <svg viewBox="0 0 24 24" className="size-6">
          <rect width="24" height="24" rx="4" fill="#0075ff" />
          <path d="M5 12.500L10 17.500L19 6" fill="none" stroke="#fff" strokeWidth="3.4" />
        </svg>
      ) : (
        <span className="size-6 rounded-[4px] border-2 border-[#767676]" />
      )}
      <span className="ml-2 pt-1 leading-6">{label}</span>
    </label>
  );
}

const primary = "flex items-center justify-center bg-[#3142a6] text-[#f4f4f4]";
const outline = "flex items-center justify-center border-2 border-[#bfbfc4] bg-white text-black";
const head = "shrink-0 pt-4 font-bold leading-[40px]";
const row = "flex border-t-2 border-[#dedede] pl-4";

export default function App() {
  return (
    <div className="h-[2578px] w-[3840px] overflow-hidden bg-white font-['Inter','Noto_Sans_CJK_KR',sans-serif] text-[26.88px] font-[350] tracking-[-0.5px] text-[#333]">
      <div className="mx-auto w-[2688px]">
        <header className="h-[628px] text-black">
          <div className="flex items-start justify-between pt-[60px]">
            <Logo className="ml-px h-[76px] w-[265px]" />
            <div className="mt-[18px] flex gap-[38px] leading-[40px]">
              <a>관리자 페이지</a>
              <a>로그아웃</a>
            </div>
          </div>
          <nav className="mx-auto mt-[80px] grid w-[1385px] grid-cols-5 text-center text-[29.500px] leading-[40px]">
            <a>타세요</a>
            <a>이용내역</a>
            <a>쪽지함</a>
            <a>마이페이지</a>
            <a>고객센터</a>
          </nav>
          <h2 className="mt-[214px] text-center text-[46px] font-[350] leading-[64px] tracking-[-0.8px] text-[#333]">타세요 작성</h2>
        </header>

        <section className={`${row} h-[94px]`}>
          <div className={`${head} w-[200px]`}>출발지</div>
          <div className="flex w-[981px] pt-[15px]">
            <input
              className="h-14 w-[455px] border-b-2 border-[#6f6f6f] px-[4px] pt-1 outline-none"
              defaultValue="서울특별시 용산구 후암로4길"
            />
            <button className={`${primary} ml-[7px] h-[62px] w-[160px]`}>출발지 등록</button>
          </div>
          <div className={`${head} w-[199px]`}>도착지</div>
          <div className="flex pt-[15px]">
            <input
              className="h-14 w-[456px] border-b-2 border-[#6f6f6f] px-[4px] pt-1 outline-none"
              defaultValue="서울특별시 양천구 목동서로 목동신시가지아파트"
            />
            <button className={`${primary} ml-[6px] h-[62px] w-[161px]`}>도착지 등록</button>
          </div>
        </section>

        <section className={`${row} h-[98px] pt-4`}>
          <div className="flex h-[57px] w-[383px] items-center justify-between border-b-2 border-[#6f6f6f] pl-[7px] pr-2 pt-2">
            <span>교통최적+추천</span>
            <Chevron />
          </div>
          <div className="ml-[7px] flex h-[57px] w-[251px] items-center justify-between border-b-2 border-[#6f6f6f] pl-[8px] pr-2 pt-2">
            <span>교통정보 표출 옵션</span>
            <Chevron />
          </div>
          <button className={`${outline} ml-[7px] h-[65px] w-[150px]`}>경로탐색</button>
          <button className={`${outline} ml-[7px] h-[65px] w-[125px]`}>초기화</button>
        </section>

        <section className={`${row} h-[894px] flex-col pt-4`}>
          <RouteMap />
          <p className="flex leading-[40px]">
            <span className="w-[224px] tracking-[-0.2px]">총 거리 : 13.1km,</span>
            <span className="w-[197px]">총 시간 : 50분,</span>
            <span className="w-[173px]">통행료 : 0원,</span>
            <span className="tracking-[-0.3px]">예상 택시 요금 : 18000원</span>
          </p>
        </section>

        <section className={`${row} h-[78px]`}>
          <div className={`${head} w-[200px]`}>출발일</div>
          <div className="flex w-[981px] items-start pl-1 pt-[18px] leading-[40px] tracking-[0.6px]">
            <span className="w-[252px]">2021-08-06</span>
            <svg viewBox="0 0 27 28" className="mt-1 h-7 w-[27px]">
              <path d="M2 4.500H25V26H2Z" fill="none" stroke="#000" strokeWidth="3" />
              <path d="M1 3H26V10H1ZM4 0H7V4H4ZM20 0H23V4H20Z" />
            </svg>
          </div>
          <div className={`${head} w-[199px]`}>출발시간</div>
          <div className="w-[845px] pt-[17px]">
            <div className="h-[43px] w-[381px] bg-[#e8f0fe] pl-1 leading-[43px] text-black">13:00</div>
          </div>
          <div className={`${head} w-[200px]`}>카풀 인원</div>
          <div className="pt-[17px]">
            <div className="flex h-[39px] w-[97px] items-center justify-between border-2 border-[#767676] pl-2 pr-1.5">
              <span>2 명</span>
              <Chevron />
            </div>
          </div>
        </section>

        <section className={`${row} h-[78px]`}>
          <div className={`${head} w-[200px]`}>금액</div>
          <div className="flex w-[981px] pt-4 leading-[43px]">
            <div className="h-[43px] w-[158px] bg-[#e8f0fe] pl-1 text-black">4000</div>
            원/인당
          </div>
          <div className={`${head} w-[203px]`}>소요시간</div>
          <div className="flex pt-4 leading-[43px]">
            <span className="w-[95px]">50</span>분
          </div>
        </section>

        <section className={`${row} h-[92px]`}>
          <div className={`${head} w-[200px]`}>성별제한</div>
          <div className="flex w-[981px] items-start pt-[30px] leading-[40px]">
            <Radio label="무관" className="w-[115px]" />
            <Radio label="남자" checked className="w-[116px]" />
            <Radio label="여자" />
          </div>
          <div className={`${head} w-[240px]`}>참고사항</div>
          <div className="flex pt-[37px]">
            <Check label="애완동물 허용" className="w-[252px]" />
            <Check label="조용한 카풀" checked className="w-[227px]" />
            <Check label="음식물 섭취" className="w-[228px]" />
            <Check label="마스크 착용" checked />
          </div>
        </section>

        <section className={`${row} h-[258px] border-b-2`}>
          <div className={`${head} w-[200px]`}>기타 요구사항</div>
          <div className="relative mt-[15px] h-[214px] w-[2456px] rounded-[3px] border-2 border-[#767676] px-1 pt-[5px] leading-[40px]">
            카풀 모집합니다
            <svg viewBox="0 0 14 14" className="absolute bottom-0 right-0 size-3.5" stroke="#777" strokeWidth="1.400">
              <path d="M2 13L13 2M8 13L13 8" />
            </svg>
          </div>
        </section>

        <div className="mt-[46px] flex justify-center gap-[6px]">
          <button className={`${outline} h-[65px] w-[101px]`}>취소</button>
          <button className={`${primary} h-[65px] w-[149px]`}>등록하기</button>
        </div>

        <footer className="mt-[114px] flex flex-col items-center">
          <Logo className="h-[41px] w-[140px]" />
          <p className="mt-[31px] leading-[40px] tracking-[-0.1px]">Copyright © 2021 All Rights Reserved</p>
        </footer>
      </div>
    </div>
  );
}
